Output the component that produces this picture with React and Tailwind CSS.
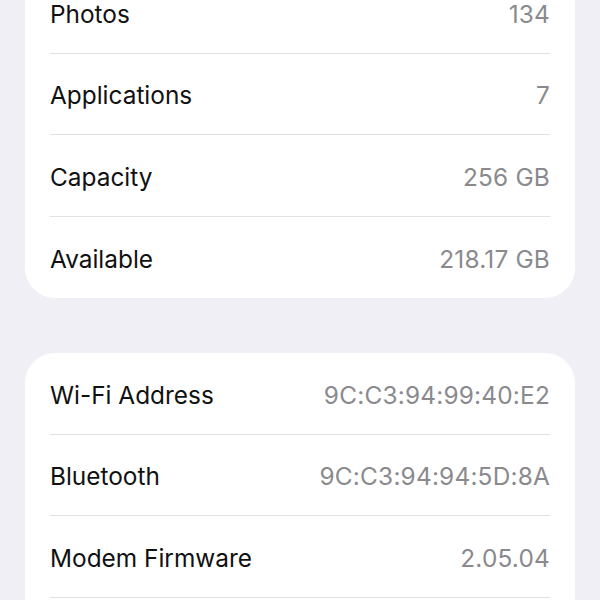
const sections = [
  [
    { label: "Photos", value: "134" },
    { label: "Applications", value: "7" },
    { label: "Capacity", value: "256 GB" },
    { label: "Available", value: "218.17 GB" },
  ],
  [
    { label: "Wi-Fi Address", value: "9C:C3:94:99:40:E2" },
    { label: "Bluetooth", value: "9C:C3:94:94:5D:8A" },
    { label: "Modem Firmware", value: "2.05.04" },
    { label: "", value: "" },
  ],
];

export default function App() {
  return (
    <div
      className="h-[600px] overflow-hidden bg-[#f0eff5] px-[25px]"
      style={{ fontFamily: "Inter, 'Noto Sans', sans-serif" }}
    >
      <div className="flex flex-col gap-[55px] mt-[-28px]">
        {sections.map((rows, si) => (
          <div key={si} className="bg-white rounded-[30px] overflow-hidden">
            {rows.map((r, i) => (
              <div
                key={i}
                className={`mx-[25px] h-[81.5px] pt-[4px] flex items-center justify-between text-[24.4px] ${
                  i < rows.length - 1 ? "border-b border-[#e2e2e6]" : ""
                }`}
              >
                <span className="text-[#111]">{r.label}</span>
                <span className="text-[#8a8a8e] tracking-[0.2px]">{r.value}</span>
              </div>
            ))}
          </div>
        ))}
      </div>
    </div>
  );
}
